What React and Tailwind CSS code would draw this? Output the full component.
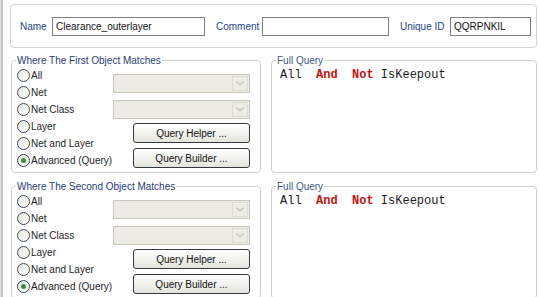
import React from 'react'

const opts = ['All', 'Net', 'Net Class', 'Layer', 'Net and Layer', 'Advanced (Query)']

function Radio({ label, checked }) {
  return (
    <div className="h-[17px] flex items-center">
      <span className="ml-[1px] w-[13px] h-[13px] rounded-full border border-[#3f4c5e] bg-gradient-to-br from-[#e4e4dc] to-white flex items-center justify-center shrink-0">
        {checked && <span className="w-[5px] h-[5px] rounded-full bg-[#3e8f3e]" />}
      </span>
      <span className="ml-[1px] text-[#1e1e1e]">{label}</span>
    </div>
  )
}

function Select() {
  return (
    <div className="w-[137px] h-[19px] border border-[#c9c7ba] bg-[#ecebe5] flex justify-end p-[1px]">
      <div className="w-[16px] h-full border border-[#dcdcd4] flex items-center justify-center">
        <svg width="8" height="5" viewBox="0 0 8 5">
          <polyline points="0.5,0.5 4,4 7.5,0.5" fill="none" stroke="#c2c2b8" strokeWidth="1.2" />
        </svg>
      </div>
    </div>
  )
}

function Btn({ children }) {
  return (
    <div className="w-[117px] h-[20px] border border-[#35393f] rounded-[3px] bg-gradient-to-b from-white to-[#e4e4de] flex items-center justify-center text-[#111]">
      {children}
    </div>
  )
}

function ObjectGroup({ title }) {
  return (
    <fieldset className="w-[250px] h-[119px] ml-[1px] border border-[#d0d0c8] rounded-[4px] pl-[4px] pr-[10px] shrink-0">
      <legend className="px-[1px] leading-[13px] text-[#1f3c74]">{title}</legend>
      <div className="flex">
        <div className="w-[97px] flex flex-col">
          {opts.map((o, i) => (
            <Radio key={o} label={o} checked={i === 5} />
          ))}
        </div>
        <div className="flex flex-col items-end mt-[7px]">
          <Select />
          <div className="mt-[7px]"><Select /></div>
          <div className="mt-[4px]"><Btn>Query Helper ...</Btn></div>
          <div className="mt-[5px]"><Btn>Query Builder ...</Btn></div>
        </div>
      </div>
    </fieldset>
  )
}

function QueryGroup() {
  return (
    <fieldset className="w-[266px] h-[119px] border border-[#d0d0c8] rounded-[4px] pl-[4px] shrink-0">
      <legend className="px-[1px] leading-[13px] text-[#3c5a84]">Full Query</legend>
      <div className="pl-[4px] pt-[1px] font-['Liberation_Mono','Courier_New',monospace] text-[12px] leading-[14px] text-[#1a1a1a] whitespace-pre">
        All  <b className="text-[#c81010]">And</b>  <b className="text-[#c81010]">Not</b> IsKeepout
      </div>
    </fieldset>
  )
}

export default function App() {
  return (
    <div className="w-[540px] h-[297px] overflow-hidden bg-white flex font-['Liberation_Sans',Arial,sans-serif] text-[10px]">
      <div className="w-[3px] shrink-0 bg-[#c4c4c4] border-l border-[#e2e2e2]" />
      <div className="flex-1 pl-[7px] pr-[3px] pt-[4px] flex flex-col">
        <div className="h-[44px] border border-[#d3d3d3] rounded-[4px] flex items-center pl-[9px] shrink-0">
          <span className="w-[32px] text-[#26468c]">Name</span>
          <div className="w-[153px] h-[19px] border border-[#7f7f7f] bg-white flex items-center pl-[3px] text-[#111]">
            Clearance_outerlayer
          </div>
          <span className="ml-[11px] w-[46px] text-[#26468c]">Comment</span>
          <div className="w-[127px] h-[19px] border border-[#7f7f7f] bg-white" />
          <span className="ml-[11px] w-[50px] text-[#26468c]">Unique ID</span>
          <div className="w-[81px] h-[19px] border border-[#7f7f7f] bg-white flex items-center pl-[3px] text-[#111]">
            QQRPNKIL
          </div>
        </div>
        <div className="mt-[6px] flex gap-[10px]">
          <ObjectGroup title="Where The First Object Matches" />
          <QueryGroup />
        </div>
        <div className="mt-[7px] flex gap-[10px]">
          <ObjectGroup title="Where The Second Object Matches" />
          <QueryGroup />
        </div>
      </div>
    </div>
  )
}
